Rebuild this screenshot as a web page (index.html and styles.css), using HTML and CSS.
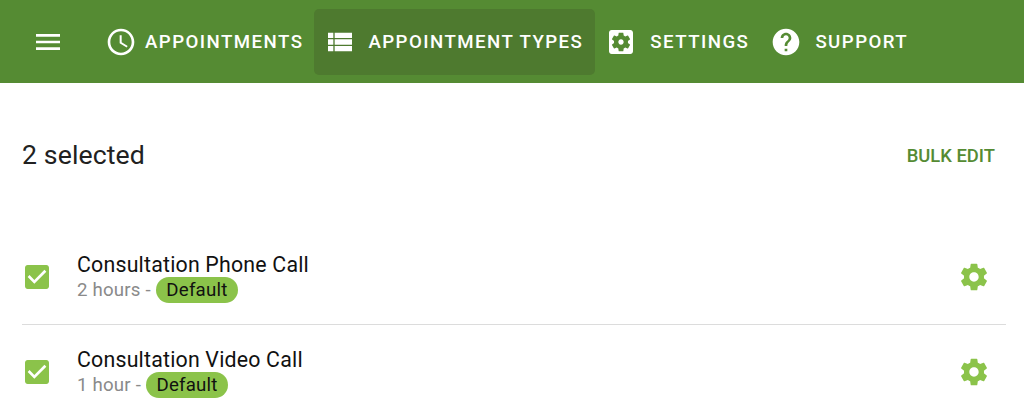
FILE: index.html
```
<!DOCTYPE html>
<html lang="en">
<head>
<meta charset="utf-8">
<title>Appointment Types</title>
<link rel="stylesheet" href="styles.css">
</head>
<body>
<header class="topbar">
  <button class="menu-btn" aria-label="Menu"><svg class="icon" viewBox="0 0 24 24"><path d="M3 18h18v-2H3v2zm0-5h18v-2H3v2zm0-7v2h18V6H3z"/></svg></button>
  <nav class="nav">
    <a class="nav-item nav-item-tight"><svg class="icon" viewBox="0 0 24 24"><path d="M11.99 2C6.47 2 2 6.48 2 12s4.47 10 9.99 10C17.52 22 22 17.52 22 12S17.52 2 11.99 2zM12 20c-4.42 0-8-3.58-8-8s3.58-8 8-8 8 3.58 8 8-3.58 8-8 8zm.5-13H11v6l5.25 3.15.75-1.23-4.5-2.67z"/></svg><span>APPOINTMENTS</span></a>
    <a class="nav-item active"><svg class="icon" viewBox="0 0 24 24"><path d="M3 14h4v-4H3v4zm0 5h4v-4H3v4zM3 9h4V5H3v4zm5 5h13v-4H8v4zm0 5h13v-4H8v4zM8 5v4h13V5H8z"/></svg><span>APPOINTMENT TYPES</span></a>
    <a class="nav-item"><svg class="icon" viewBox="0 0 24 24"><path d="M12 10c-1.1 0-2 .9-2 2s.9 2 2 2 2-.9 2-2-.9-2-2-2zm7-7H5c-1.11 0-2 .9-2 2v14c0 1.1.89 2 2 2h14c1.11 0 2-.9 2-2V5c0-1.1-.89-2-2-2zm-1.75 9c0 .23-.02.46-.05.68l1.48 1.16c.13.11.17.3.08.45l-1.4 2.42c-.09.15-.27.21-.43.15l-1.74-.7c-.36.28-.76.51-1.18.69l-.26 1.85c-.03.17-.18.3-.35.3h-2.8c-.17 0-.32-.13-.35-.29l-.26-1.85c-.43-.18-.82-.41-1.18-.69l-1.74.7c-.16.06-.34 0-.43-.15l-1.4-2.42c-.09-.15-.05-.34.08-.45l1.48-1.16c-.03-.23-.05-.46-.05-.69 0-.23.02-.46.05-.68l-1.48-1.16c-.13-.11-.17-.3-.08-.45l1.4-2.42c.09-.15.27-.21.43-.15l1.74.7c.36-.28.76-.51 1.18-.69l.26-1.85c.03-.17.18-.3.35-.3h2.8c.17 0 .32.13.35.29l.26 1.85c.43.18.82.41 1.18.69l1.74-.7c.16-.06.34 0 .43.15l1.4 2.42c.09.15.05.34-.08.45l-1.48 1.16c.03.23.05.46.05.69z"/></svg><span>SETTINGS</span></a>
    <a class="nav-item"><svg class="icon" viewBox="0 0 24 24"><path d="M12 2C6.48 2 2 6.48 2 12s4.48 10 10 10 10-4.48 10-10S17.52 2 12 2zm1 17h-2v-2h2v2zm2.07-7.75l-.9.92C13.45 12.9 13 13.5 13 15h-2v-.5c0-1.1.45-2.1 1.17-2.83l1.24-1.26c.37-.36.59-.86.59-1.41 0-1.1-.9-2-2-2s-2 .9-2 2H8c0-2.21 1.79-4 4-4s4 1.79 4 4c0 .88-.36 1.68-.93 2.25z"/></svg><span>SUPPORT</span></a>
  </nav>
</header>
<main class="content">
  <div class="toolbar">
    <h1 class="selected">2 selected</h1>
    <a class="bulk">BULK EDIT</a>
  </div>
  <ul class="list">
    <li class="row">
      <svg class="icon check" viewBox="0 0 24 24"><path d="M19 3H5c-1.11 0-2 .9-2 2v14c0 1.1.89 2 2 2h14c1.11 0 2-.9 2-2V5c0-1.1-.89-2-2-2zm-9 14l-5-5 1.41-1.41L10 14.17l7.59-7.59L19 8l-9 9z"/></svg>
      <div class="info">
        <div class="title">Consultation Phone Call</div>
        <div class="meta"><span>2 hours -</span><span class="badge">Default</span></div>
      </div>
      <svg class="icon gear" viewBox="0 0 24 24"><path d="M19.43 12.98c.04-.32.07-.64.07-.98s-.03-.66-.07-.98l2.11-1.65c.19-.15.24-.42.12-.64l-2-3.46c-.12-.22-.39-.3-.61-.22l-2.49 1c-.52-.4-1.08-.73-1.69-.98l-.38-2.65C14.46 2.18 14.25 2 14 2h-4c-.25 0-.46.18-.49.42l-.38 2.65c-.61.25-1.17.59-1.69.98l-2.49-1c-.23-.09-.49 0-.61.22l-2 3.46c-.13.22-.07.49.12.64l2.11 1.65c-.04.32-.07.65-.07.98s.03.66.07.98l-2.11 1.65c-.19.15-.24.42-.12.64l2 3.46c.12.22.39.3.61.22l2.49-1c.52.4 1.08.73 1.69.98l.38 2.65c.03.24.24.42.49.42h4c.25 0 .46-.18.49-.42l.38-2.65c.61-.25 1.17-.59 1.69-.98l2.49 1c.23.09.49 0 .61-.22l2-3.46c.12-.22.07-.49-.12-.64l-2.11-1.65zM12 15.5c-1.93 0-3.5-1.57-3.5-3.5s1.57-3.5 3.5-3.5 3.5 1.57 3.5 3.5-1.57 3.5-3.5 3.5z"/></svg>
    </li>
    <li class="row">
      <svg class="icon check" viewBox="0 0 24 24"><path d="M19 3H5c-1.11 0-2 .9-2 2v14c0 1.1.89 2 2 2h14c1.11 0 2-.9 2-2V5c0-1.1-.89-2-2-2zm-9 14l-5-5 1.41-1.41L10 14.17l7.59-7.59L19 8l-9 9z"/></svg>
      <div class="info">
        <div class="title">Consultation Video Call</div>
        <div class="meta"><span>1 hour -</span><span class="badge">Default</span></div>
      </div>
      <svg class="icon gear" viewBox="0 0 24 24"><path d="M19.43 12.98c.04-.32.07-.64.07-.98s-.03-.66-.07-.98l2.11-1.65c.19-.15.24-.42.12-.64l-2-3.46c-.12-.22-.39-.3-.61-.22l-2.49 1c-.52-.4-1.08-.73-1.69-.98l-.38-2.65C14.46 2.18 14.25 2 14 2h-4c-.25 0-.46.18-.49.42l-.38 2.65c-.61.25-1.17.59-1.69.98l-2.49-1c-.23-.09-.49 0-.61.22l-2 3.46c-.13.22-.07.49.12.64l2.11 1.65c-.04.32-.07.65-.07.98s.03.66.07.98l-2.11 1.65c-.19.15-.24.42-.12.64l2 3.46c.12.22.39.3.61.22l2.49-1c.52.4 1.08.73 1.69.98l.38 2.65c.03.24.24.42.49.42h4c.25 0 .46-.18.49-.42l.38-2.65c.61-.25 1.17-.59 1.69-.98l2.49 1c.23.09.49 0 .61-.22l2-3.46c.12-.22.07-.49-.12-.64l-2.11-1.65zM12 15.5c-1.93 0-3.5-1.57-3.5-3.5s1.57-3.5 3.5-3.5 3.5 1.57 3.5 3.5-1.57 3.5-3.5 3.5z"/></svg>
    </li>
  </ul>
</main>
</body>
</html>
```

FILE: styles.css
```
* { box-sizing: border-box; }
html, body { height: 100%; }
body {
  margin: 0;
  overflow: hidden;
  background: #fff;
  color: #212121;
  font-family: Roboto, sans-serif;
}
.icon { display: block; width: 32px; height: 32px; fill: currentColor; flex: none; }

.topbar {
  display: flex;
  align-items: center;
  height: 83px;
  padding-left: 32px;
  background: #558b33;
  color: #fff;
}
.menu-btn {
  padding: 0;
  border: 0;
  margin-right: 31px;
  background: none;
  color: inherit;
}
.nav { display: flex; align-items: center; }
.nav-item {
  display: flex;
  align-items: center;
  gap: 13px;
  height: 66px;
  padding: 0 11px 0 10px;
  border-radius: 5px;
  font-size: 18.67px;
  font-weight: 500;
  letter-spacing: 1.45px;
  white-space: nowrap;
}
.nav-item-tight { gap: 8px; }
.active { gap: 12px; padding-right: 12px; background: #4e7a2f; }

.content { padding: 0 18px 0 22px; }
.toolbar {
  display: flex;
  justify-content: space-between;
  align-items: center;
  height: 144px;
  padding: 0 11px 0 0;
}
.selected {
  margin: 0;
  font-size: 26.67px;
  font-weight: 400;
  letter-spacing: 0.1px;
}
.bulk {
  font-size: 18.4px;
  font-weight: 500;
  color: #558b33;
}
.list { margin: 0; padding: 0; list-style: none; }
.row {
  display: flex;
  align-items: center;
  height: 95px;
  padding: 0 16px 0 0;
  margin-top: 3px;
  border-bottom: 1px solid #dcdcdc;
}
.row + .row { height: 93px; margin-top: 0; border-bottom: 0; }
.check { margin-left: -1px; color: #8bc34a; }
.info { flex: 1; margin-left: 24px; padding: 2px 0 1px; }
.title {
  font-size: 21.33px;
  line-height: 25px;
  color: #111;
  letter-spacing: 0.2px;
}
.meta {
  display: flex;
  align-items: center;
  gap: 5px;
  font-size: 18.67px;
  color: #8a8a8a;
  letter-spacing: 0.2px;
}
.badge {
  display: block;
  padding: 0 10.5px;
  line-height: 26px;
  border-radius: 13px;
  background: #8bc34a;
  color: #111;
}
.gear { color: #8bc34a; }
```
